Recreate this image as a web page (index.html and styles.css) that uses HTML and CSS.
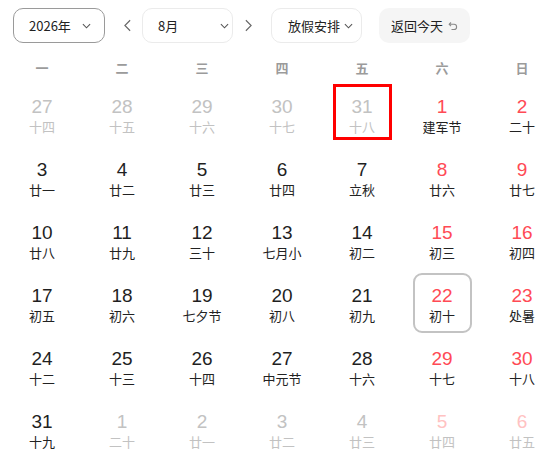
FILE: index.html
```html
<!DOCTYPE html>
<html lang="zh">
<head>
<meta charset="utf-8">
<link rel="stylesheet" href="styles.css">
</head>
<body>
<div class="cal">
  <div class="bar">
    <div class="select year"><span>2026年</span><svg class="chev" viewBox="0 0 10 6"><path d="M1 1l4 4 4-4"/></svg></div>
    <div class="nav prev"><svg viewBox="0 0 8 14"><path d="M7 1L1 7l6 6"/></svg></div>
    <div class="select month"><span>8月</span><svg class="chev" viewBox="0 0 10 6"><path d="M1 1l4 4 4-4"/></svg></div>
    <div class="nav next"><svg viewBox="0 0 8 14"><path d="M1 1l6 6-6 6"/></svg></div>
    <div class="select holiday"><span>放假安排</span><svg class="chev" viewBox="0 0 10 6"><path d="M1 1l4 4 4-4"/></svg></div>
    <div class="today-btn"><span>返回今天</span><svg class="ret" viewBox="0 0 10 10"><path d="M3 1.5L1.2 3.3 3 5.1"/><path d="M1.5 3.3H6a2.6 2.6 0 0 1 0 5.2H3.5"/></svg></div>
  </div>
  <div class="week">
    <span>一</span><span>二</span><span>三</span><span>四</span><span>五</span><span>六</span><span>日</span>
  </div>
  <div class="grid">
    <div class="cell dim"><b>27</b><i>十四</i></div>
    <div class="cell dim"><b>28</b><i>十五</i></div>
    <div class="cell dim"><b>29</b><i>十六</i></div>
    <div class="cell dim"><b>30</b><i>十七</i></div>
    <div class="cell dim mark"><b>31</b><i>十八</i></div>
    <div class="cell red"><b>1</b><i>建军节</i></div>
    <div class="cell red"><b>2</b><i>二十</i></div>

    <div class="cell"><b>3</b><i>廿一</i></div>
    <div class="cell"><b>4</b><i>廿二</i></div>
    <div class="cell"><b>5</b><i>廿三</i></div>
    <div class="cell"><b>6</b><i>廿四</i></div>
    <div class="cell"><b>7</b><i>立秋</i></div>
    <div class="cell red"><b>8</b><i>廿六</i></div>
    <div class="cell red"><b>9</b><i>廿七</i></div>

    <div class="cell"><b>10</b><i>廿八</i></div>
    <div class="cell"><b>11</b><i>廿九</i></div>
    <div class="cell"><b>12</b><i>三十</i></div>
    <div class="cell"><b>13</b><i>七月小</i></div>
    <div class="cell"><b>14</b><i>初二</i></div>
    <div class="cell red"><b>15</b><i>初三</i></div>
    <div class="cell red"><b>16</b><i>初四</i></div>

    <div class="cell"><b>17</b><i>初五</i></div>
    <div class="cell"><b>18</b><i>初六</i></div>
    <div class="cell"><b>19</b><i>七夕节</i></div>
    <div class="cell"><b>20</b><i>初八</i></div>
    <div class="cell"><b>21</b><i>初九</i></div>
    <div class="cell red today"><b>22</b><i>初十</i></div>
    <div class="cell red"><b>23</b><i>处暑</i></div>

    <div class="cell"><b>24</b><i>十二</i></div>
    <div class="cell"><b>25</b><i>十三</i></div>
    <div class="cell"><b>26</b><i>十四</i></div>
    <div class="cell"><b>27</b><i>中元节</i></div>
    <div class="cell"><b>28</b><i>十六</i></div>
    <div class="cell red"><b>29</b><i>十七</i></div>
    <div class="cell red"><b>30</b><i>十八</i></div>

    <div class="cell"><b>31</b><i>十九</i></div>
    <div class="cell dim"><b>1</b><i>二十</i></div>
    <div class="cell dim"><b>2</b><i>廿一</i></div>
    <div class="cell dim"><b>3</b><i>廿二</i></div>
    <div class="cell dim"><b>4</b><i>廿三</i></div>
    <div class="cell dim red"><b>5</b><i>廿四</i></div>
    <div class="cell dim red"><b>6</b><i>廿五</i></div>
  </div>
</div>
</body>
</html>
```

FILE: styles.css
```css
html, body {
  margin: 0;
  padding: 0;
  background: #fff;
  overflow: hidden;
}
body {
  font-family: "Noto Sans CJK SC", "Noto Sans", sans-serif;
  color: #222;
}
.cal {
  width: 559px;
  height: 468px;
  overflow: hidden;
}
.bar {
  display: flex;
  align-items: center;
  padding: 8px 0 0 13px;
  height: 35px;
}
.select {
  box-sizing: border-box;
  height: 35px;
  width: 91px;
  border: 1px solid #ebebeb;
  border-radius: 10px;
  display: flex;
  align-items: center;
  font-size: 13px;
  color: #222;
}
.select.year {
  width: 92px;
  border-color: #9a9a9a;
  padding-left: 15px;
}
.select.year .chev { margin-left: 11px; }
.select.month { padding-left: 15px; }
.select.month .chev { margin-left: 42px; }
.select.holiday { padding-left: 16px; }
.select.holiday .chev { margin-left: 4px; }
.chev {
  width: 9px;
  height: 6px;
  fill: none;
  stroke: #555;
  stroke-width: 1.2;
}
.nav {
  height: 35px;
  display: flex;
  align-items: center;
  justify-content: center;
}
.nav svg {
  width: 7px;
  height: 13px;
  fill: none;
  stroke: #666;
  stroke-width: 1.3;
}
.prev { width: 37px; padding-left: 8px; box-sizing: border-box; }
.next { width: 38px; padding-right: 8px; box-sizing: border-box; }
.today-btn {
  box-sizing: border-box;
  margin-left: 17px;
  width: 91px;
  height: 35px;
  border-radius: 10px;
  background: #f5f5f5;
  display: flex;
  align-items: center;
  padding-left: 12px;
  font-size: 13px;
  color: #222;
}
.ret {
  width: 10px;
  height: 10px;
  margin-left: 5px;
  fill: none;
  stroke: #888;
  stroke-width: 1.1;
}
.week {
  display: grid;
  grid-template-columns: repeat(7, 80px);
  margin: 5px 0 0 2px;
  height: 36px;
  align-items: center;
}
.week span {
  text-align: center;
  font-size: 13px;
  font-weight: bold;
  color: #9b9b9b;
  padding-top: 3px;
}
.grid {
  display: grid;
  grid-template-columns: repeat(7, 80px);
  grid-auto-rows: 63px;
  margin-left: 2px;
}
.cell {
  position: relative;
  display: flex;
  flex-direction: column;
  align-items: center;
  justify-content: center;
}
.cell b {
  font-family: "Liberation Sans", Arial, sans-serif;
  font-weight: normal;
  font-size: 19px;
  line-height: 22px;
  color: #1f1f1f;
}
.cell i {
  font-style: normal;
  font-size: 13px;
  line-height: 18px;
  color: #222;
}
.cell.red b { color: #ff4a55; }
.cell.dim b, .cell.dim i { color: #c2c2c2; }
.cell.dim.red b { color: #ffc2c2; }
.cell.today::before {
  content: "";
  position: absolute;
  left: 11px;
  top: 0;
  width: 59px;
  height: 60px;
  box-sizing: border-box;
  border: 2px solid #c3c3c3;
  border-radius: 9px;
}
.cell.mark::after {
  content: "";
  position: absolute;
  left: 11px;
  top: 0;
  width: 59px;
  height: 56px;
  box-sizing: border-box;
  border: 3px solid #ff0000;
}
```
